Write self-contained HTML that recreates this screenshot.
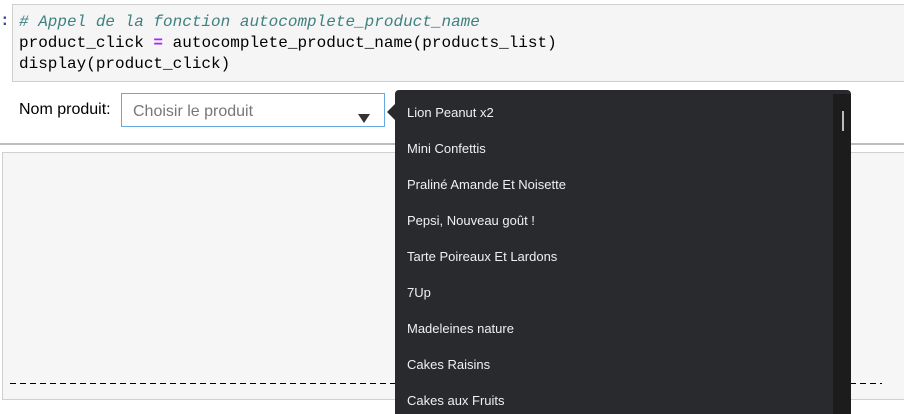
<!DOCTYPE html>
<html><head><meta charset="utf-8"><style>
html,body{margin:0;padding:0;width:904px;height:414px;overflow:hidden;background:#fff;position:relative;font-family:"Liberation Sans",sans-serif}
.abs{position:absolute}
.code{left:12px;top:4px;width:892px;height:78px;background:#f5f5f5;border:1px solid #cfcfcf;border-right:none;box-sizing:border-box}
.code pre{margin:0;position:absolute;left:6px;top:7px;font-family:"Liberation Mono",monospace;font-size:16px;line-height:21px;color:#000}
.cm{color:#408080;font-style:italic}
.op{color:#aa22ff;font-weight:bold}
.lbl{left:19px;top:101px;font-size:16px;color:#000}
.sel{left:121px;top:93px;width:264px;height:34px;border:1px solid #66a9e0;box-sizing:border-box;background:#fff}
.sel span{position:absolute;left:11px;top:9px;font-size:16px;color:#777}
.arrow{left:358px;top:114px;width:0;height:0;border-left:6px solid transparent;border-right:6px solid transparent;border-top:9px solid #333}
.hr{left:0;top:143px;width:904px;height:2px;background:#bdbdbd}
.out{left:2px;top:152px;width:905px;height:248px;background:#f6f6f6;border:1px solid #d0d0d0;box-sizing:border-box}
.dash{left:10px;top:383px;width:872px;height:1px;background:repeating-linear-gradient(90deg,#000 0 6px,transparent 6px 10px)}
.dd{left:395px;top:90px;width:456px;height:340px;background:#292a2e;border-radius:4px}
.caret{left:387px;top:104px;width:0;height:0;border-top:8px solid transparent;border-bottom:8px solid transparent;border-right:8px solid #292a2e}
.track{left:833px;top:94px;width:18px;height:330px;background:#1c1c1c}
.thumb{left:842px;top:111px;width:2px;height:20px;background:#bbb}
.it{position:absolute;left:12px;font-size:13px;color:#f0f0f0;font-family:"Liberation Sans",sans-serif}
</style></head><body>
<div class="abs" style="left:0;top:12px;font-family:'Liberation Mono',monospace;font-size:16px;color:#303f9f;font-weight:bold">:</div>
<div class="abs code"><pre><span class="cm"># Appel de la fonction autocomplete_product_name</span>
product_click <span class="op">=</span> autocomplete_product_name(products_list)
display(product_click)</pre></div>
<div class="abs lbl">Nom produit:</div>
<div class="abs sel"><span>Choisir le produit</span></div>
<div class="abs arrow"></div>
<div class="abs hr"></div>
<div class="abs out"></div>
<div class="abs dash"></div>
<div class="abs caret"></div>
<div class="abs dd">
<div class="it" style="top:15px">Lion Peanut x2</div>
<div class="it" style="top:51px">Mini Confettis</div>
<div class="it" style="top:87px">Praliné Amande Et Noisette</div>
<div class="it" style="top:123px">Pepsi, Nouveau goût !</div>
<div class="it" style="top:159px">Tarte Poireaux Et Lardons</div>
<div class="it" style="top:195px">7Up</div>
<div class="it" style="top:231px">Madeleines nature</div>
<div class="it" style="top:267px">Cakes Raisins</div>
<div class="it" style="top:303px">Cakes aux Fruits</div>
</div>
<div class="abs track"></div>
<div class="abs thumb"></div>
</body></html>
